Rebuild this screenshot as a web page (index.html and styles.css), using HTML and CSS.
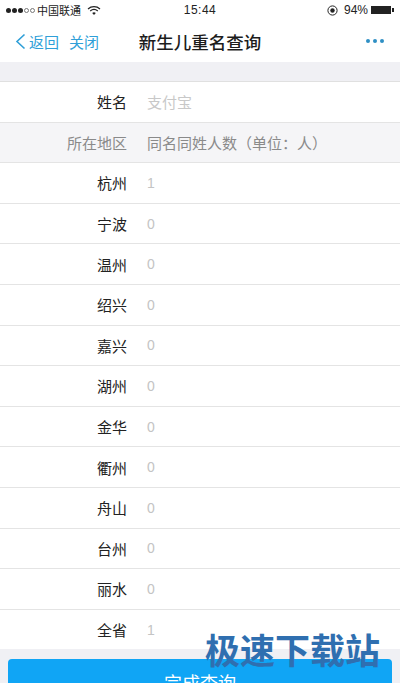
FILE: index.html
```html
<!DOCTYPE html>
<html lang="zh">
<head>
  <meta charset="utf-8">
  <title>新生儿重名查询</title>
  <meta name="viewport" content="width=device-width, initial-scale=1.0">
  <link rel="stylesheet" href="styles.css">
</head>
<body>
  <div class="status">
    <div class="status-left">
      <span class="sig">
        <i class="dot"></i><i class="dot"></i><i class="dot"></i><i class="dot off"></i><i class="dot off"></i>
      </span>
      <span>中国联通</span>
      <svg class="wifi" width="14" height="11" viewBox="0 0 14 11">
        <path d="M1 4 A9 9 0 0 1 13 4" fill="none" stroke="#222" stroke-width="1.2"/>
        <path d="M3.2 6 A6 6 0 0 1 10.8 6" fill="none" stroke="#222" stroke-width="1.2"/>
        <path d="M5.2 8 A3 3 0 0 1 8.8 8 L7 10 Z" fill="#222"/>
      </svg>
    </div>
    <div class="status-time">15:44</div>
    <div class="status-right">
      <svg width="11" height="11" viewBox="0 0 11 11">
        <circle cx="5.5" cy="5.5" r="4.6" fill="none" stroke="#222" stroke-width="1"/>
        <circle cx="5.5" cy="5.5" r="2.2" fill="#222"/>
      </svg>
      <span class="pct">94%</span>
      <span class="batt"></span><span class="batt-tip"></span>
    </div>
  </div>

  <div class="nav">
    <div class="nav-left">
      <svg width="11" height="17" viewBox="0 0 11 17">
        <path d="M9.5 1.5 L2 8.5 L9.5 15.5" fill="none" stroke="#2f9fd8" stroke-width="1.6"/>
      </svg>
      <span class="back">返回</span>
      <span>关闭</span>
    </div>
    <div class="nav-title">新生儿重名查询</div>
    <div class="nav-more"><i></i><i></i><i></i></div>
  </div>

  <div class="gap"></div>

  <div class="row">
    <div class="label">姓名</div>
    <div class="val hint">支付宝</div>
  </div>
  <div class="row head">
    <div class="label">所在地区</div>
    <div class="val">同名同姓人数（单位：人）</div>
  </div>
  <div class="row"><div class="label">杭州</div><div class="val num">1</div></div>
  <div class="row"><div class="label">宁波</div><div class="val num">0</div></div>
  <div class="row"><div class="label">温州</div><div class="val num">0</div></div>
  <div class="row"><div class="label">绍兴</div><div class="val num">0</div></div>
  <div class="row"><div class="label">嘉兴</div><div class="val num">0</div></div>
  <div class="row"><div class="label">湖州</div><div class="val num">0</div></div>
  <div class="row"><div class="label">金华</div><div class="val num">0</div></div>
  <div class="row"><div class="label">衢州</div><div class="val num">0</div></div>
  <div class="row"><div class="label">舟山</div><div class="val num">0</div></div>
  <div class="row"><div class="label">台州</div><div class="val num">0</div></div>
  <div class="row"><div class="label">丽水</div><div class="val num">0</div></div>
  <div class="row last"><div class="label">全省</div><div class="val num">1</div></div>

  <div class="foot">
    <button class="submit">完成查询</button>
    <div class="mark">极速下载站</div>
  </div>
</body>
</html>
```

FILE: styles.css
```css
html, body {
  margin: 0;
  height: 683px;
  overflow: hidden;
}
body {
  background-color: #f0f0f4;
  color: #222;
  font-family: "Noto Sans CJK SC", "Liberation Sans", sans-serif;
}

.status {
  height: 20px;
  background-color: #fff;
  display: flex;
  align-items: center;
  justify-content: space-between;
  padding: 0 6px;
  font-size: 11px;
}
.status-left, .status-right {
  display: flex;
  align-items: center;
  width: 120px;
}
.status-right {
  justify-content: flex-end;
}
.status-time {
  font-family: "Liberation Sans", sans-serif;
  font-size: 12px;
  letter-spacing: 0.5px;
}
.sig {
  display: flex;
  gap: 1px;
  margin-right: 2px;
}
.dot {
  width: 5px;
  height: 5px;
  border-radius: 50%;
  background-color: #222;
  box-sizing: border-box;
}
.dot.off {
  background-color: transparent;
  border: 1px solid #777;
}
.wifi {
  margin-left: 6px;
}
.pct {
  font-family: "Liberation Sans", sans-serif;
  font-size: 12px;
  margin: 0 3px 0 6px;
}
.batt {
  width: 20px;
  height: 8px;
  background-color: #222;
}
.batt-tip {
  width: 2px;
  height: 4px;
  background-color: #222;
  margin-left: 1px;
}

.nav {
  height: 42px;
  background-color: #fff;
  position: relative;
  display: flex;
  align-items: center;
  justify-content: space-between;
  padding: 0 16px 0 15px;
}
.nav-left {
  display: flex;
  align-items: center;
  color: #2f9fd8;
  font-size: 15px;
}
.back {
  margin: 0 10px 0 3px;
}
.nav-title {
  position: absolute;
  left: 0;
  right: 0;
  text-align: center;
  font-size: 17.5px;
  font-weight: 500;
  color: #1c1c1c;
}
.nav-more {
  display: flex;
  gap: 3px;
}
.nav-more i {
  width: 4px;
  height: 4px;
  border-radius: 50%;
  background-color: #2f8fc4;
}

.gap {
  height: 19px;
  border-bottom: 1px solid #e0e0e0;
}

.row {
  height: 39.6px;
  box-sizing: content-box;
  background-color: #fff;
  border-bottom: 1px solid #e4e4e4;
  display: flex;
  align-items: center;
  font-size: 15px;
}
.row.last {
  border-bottom: 0;
}
.row.head {
  background-color: #f5f5f7;
  color: #8a8a8a;
}
.label {
  width: 127px;
  text-align: right;
  flex-shrink: 0;
}
.val {
  margin-left: 20px;
}
.hint {
  color: #c8c8c8;
}
.num {
  color: #c4c4c4;
  font-family: "Liberation Sans", sans-serif;
  font-size: 14px;
}

.foot {
  position: relative;
  padding: 10px 8px 0;
}
.submit {
  display: block;
  width: 100%;
  height: 46px;
  border: 0;
  border-radius: 4px;
  background-color: #10a5f5;
  color: #fff;
  font-family: "Noto Sans CJK SC", sans-serif;
  font-size: 18px;
}
.mark {
  position: absolute;
  right: 20px;
  top: -24px;
  font-size: 35px;
  line-height: 48px;
  font-weight: 700;
  color: #2f6fb0;
}
```
